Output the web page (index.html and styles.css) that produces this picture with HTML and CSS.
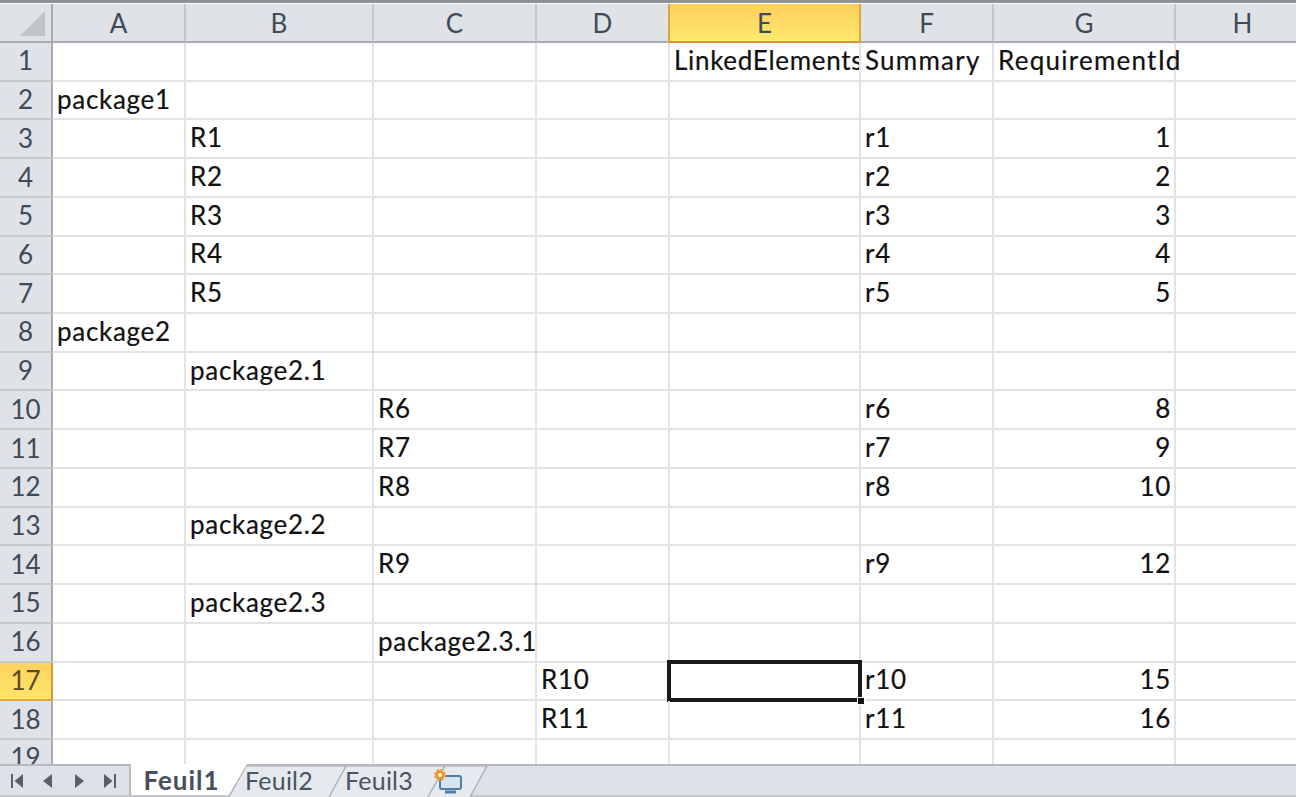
FILE: index.html
```html
<!DOCTYPE html>
<html lang="fr">
<head>
<meta charset="utf-8">
<title>Feuil1</title>
<link rel="stylesheet" href="styles.css">
</head>
<body>
<div class="window">
  <div class="sheet">
    <div class="row head">
      <div class="corner"><svg class="corner-mark" viewBox="0 0 28 28"><path d="M27 1V27H1Z"/></svg></div>
      <div class="col">A</div><div class="col">B</div><div class="col">C</div><div class="col">D</div><div class="col active">E</div><div class="col">F</div><div class="col">G</div><div class="col last">H</div>
    </div>
    <div class="row"><div class="num">1</div><div class="c"></div><div class="c"></div><div class="c"></div><div class="c"></div><div class="c clip">LinkedElements</div><div class="c wide">Summary</div><div class="c wide">RequirementId</div><div class="c"></div></div>
    <div class="row"><div class="num">2</div><div class="c">package1</div><div class="c"></div><div class="c"></div><div class="c"></div><div class="c"></div><div class="c"></div><div class="c"></div><div class="c"></div></div>
    <div class="row"><div class="num">3</div><div class="c"></div><div class="c">R1</div><div class="c"></div><div class="c"></div><div class="c"></div><div class="c">r1</div><div class="c n">1</div><div class="c"></div></div>
    <div class="row"><div class="num">4</div><div class="c"></div><div class="c">R2</div><div class="c"></div><div class="c"></div><div class="c"></div><div class="c">r2</div><div class="c n">2</div><div class="c"></div></div>
    <div class="row"><div class="num">5</div><div class="c"></div><div class="c">R3</div><div class="c"></div><div class="c"></div><div class="c"></div><div class="c">r3</div><div class="c n">3</div><div class="c"></div></div>
    <div class="row"><div class="num">6</div><div class="c"></div><div class="c">R4</div><div class="c"></div><div class="c"></div><div class="c"></div><div class="c">r4</div><div class="c n">4</div><div class="c"></div></div>
    <div class="row"><div class="num">7</div><div class="c"></div><div class="c">R5</div><div class="c"></div><div class="c"></div><div class="c"></div><div class="c">r5</div><div class="c n">5</div><div class="c"></div></div>
    <div class="row"><div class="num">8</div><div class="c">package2</div><div class="c"></div><div class="c"></div><div class="c"></div><div class="c"></div><div class="c"></div><div class="c"></div><div class="c"></div></div>
    <div class="row"><div class="num">9</div><div class="c"></div><div class="c">package2.1</div><div class="c"></div><div class="c"></div><div class="c"></div><div class="c"></div><div class="c"></div><div class="c"></div></div>
    <div class="row"><div class="num">10</div><div class="c"></div><div class="c"></div><div class="c">R6</div><div class="c"></div><div class="c"></div><div class="c">r6</div><div class="c n">8</div><div class="c"></div></div>
    <div class="row"><div class="num">11</div><div class="c"></div><div class="c"></div><div class="c">R7</div><div class="c"></div><div class="c"></div><div class="c">r7</div><div class="c n">9</div><div class="c"></div></div>
    <div class="row"><div class="num">12</div><div class="c"></div><div class="c"></div><div class="c">R8</div><div class="c"></div><div class="c"></div><div class="c">r8</div><div class="c n">10</div><div class="c"></div></div>
    <div class="row"><div class="num">13</div><div class="c"></div><div class="c">package2.2</div><div class="c"></div><div class="c"></div><div class="c"></div><div class="c"></div><div class="c"></div><div class="c"></div></div>
    <div class="row"><div class="num">14</div><div class="c"></div><div class="c"></div><div class="c">R9</div><div class="c"></div><div class="c"></div><div class="c">r9</div><div class="c n">12</div><div class="c"></div></div>
    <div class="row"><div class="num">15</div><div class="c"></div><div class="c">package2.3</div><div class="c"></div><div class="c"></div><div class="c"></div><div class="c"></div><div class="c"></div><div class="c"></div></div>
    <div class="row"><div class="num">16</div><div class="c"></div><div class="c"></div><div class="c">package2.3.1</div><div class="c"></div><div class="c"></div><div class="c"></div><div class="c"></div><div class="c"></div></div>
    <div class="row"><div class="num active">17</div><div class="c"></div><div class="c"></div><div class="c"></div><div class="c">R10</div><div class="c selected"><span class="handle"></span></div><div class="c">r10</div><div class="c n">15</div><div class="c"></div></div>
    <div class="row"><div class="num">18</div><div class="c"></div><div class="c"></div><div class="c"></div><div class="c">R11</div><div class="c"></div><div class="c">r11</div><div class="c n">16</div><div class="c"></div></div>
    <div class="row"><div class="num">19</div><div class="c"></div><div class="c"></div><div class="c"></div><div class="c"></div><div class="c"></div><div class="c"></div><div class="c"></div><div class="c"></div></div>
  </div>
  <div class="tabbar">
    <div class="nav">
      <svg class="nav-icon" viewBox="0 0 12 16"><path d="M0 1H2V15H0ZM12 1V15L3.5 8Z"/></svg>
      <svg class="nav-icon" viewBox="0 0 12 16"><path d="M10 1V15L1 8Z"/></svg>
      <svg class="nav-icon" viewBox="0 0 12 16"><path d="M2 1V15L11 8Z"/></svg>
      <svg class="nav-icon" viewBox="0 0 12 16"><path d="M12 1H10V15H12ZM0 1V15L8.500 8Z"/></svg>
    </div>
    <svg class="tab-shape" viewBox="0 0 500 31" width="500" height="31">
      <path class="tab-fill" d="M229 31L246 0H346L329 31Z"/>
      <path class="tab-fill" d="M329 31L346 0H445L428 31Z"/>
      <path class="tab-fill" d="M428 31L445 0H487L470 31Z"/>
      <path class="tab-line" d="M229 31L246 0H346M329 31L346 0H445M428 31L445 0H487L470 31"/>
    </svg>
    <div class="tab current">Feuil1</div>
    <div class="tab">Feuil2</div>
    <div class="tab">Feuil3</div>
    <div class="tab newsheet">
      <svg class="new-icon" viewBox="0 0 32 28">
        <rect x="8" y="9" width="21" height="13" rx="2" fill="#d5e3f2" stroke="#4f7eab" stroke-width="2"/>
        <path d="M13 25H24" stroke="#4f7eab" stroke-width="3"/>
        <circle cx="8" cy="8" r="4.500" fill="#e08a1e" stroke="#e9a040" stroke-width="3" stroke-dasharray="2.400 1.100"/>
        <circle cx="8" cy="8" r="2.200" fill="#ffe7b0"/>
      </svg>
    </div>
  </div>
</div>
</body>
</html>
```
FILE: styles.css
```css
* { box-sizing: border-box; }
html, body { margin: 0; height: 100%; overflow: hidden; background: #fff; }
.window {
  width: 1296px;
  height: 797px;
  display: flex;
  flex-direction: column;
  border-top: 3px solid #8f9296;
  font-family: "Lato", "Liberation Sans", sans-serif;
  font-size: 26px;
  color: #111;
}
.sheet { flex: 1; min-height: 0; overflow: hidden; display: flex; flex-direction: column; margin-top: 1px; }
.row {
  flex: none;
  display: grid;
  grid-template-columns: 53px 133px 188px 163px 133px 191px 133px 182px 133px;
  height: 38.72px;
  width: 1309px;
}
.row.head { height: 39px; }
.corner, .col {
  background: #dfe2e7;
  border-right: 2px solid #c3c6cb;
  border-bottom: 2px solid #a9adb3;
}
.corner { display: flex; align-items: flex-end; justify-content: flex-end; padding: 0 5px 4px 0; border-right-color: #a9adb3; }
.corner-mark { width: 27px; height: 27px; }
.corner-mark path { fill: #c0c3c7; }
.col, .num {
  display: flex;
  align-items: center;
  justify-content: center;
  color: #3f4a57;
}
.col.last { border-right: 0; }
.col.active {
  margin-left: -2px;
  background: linear-gradient(#fdcf5c, #ffe96f);
  border-right-color: #e2a63c;
  border-bottom-color: #d9973a;
  border-left: 2px solid #e2a63c;
}
.num {
  background: #dfe2e7;
  border-right: 2px solid #a9adb3;
  border-bottom: 2px solid #c6c9ce;
  padding-bottom: 2px;
}
.num.active {
  background: linear-gradient(#fdd35e, #ffe56b);
  color: #5b4a20;
  border-bottom-color: #e2a63c;
  border-right-color: #d9973a;
}
.c {
  position: relative;
  padding: 0 5px 3px 4px;
  display: flex;
  align-items: center;
  white-space: nowrap;
  letter-spacing: 0.7px;
  -webkit-text-stroke: 0.2px #111;
  border-right: 2px solid #e3e3e3;
  border-bottom: 2px solid #e3e3e3;
}
.c.n { justify-content: flex-end; padding-right: 3px; }
.c.wide { letter-spacing: 1.25px; }
.c.clip { overflow: hidden; }
.selected { border: 0; }
.selected::before {
  content: "";
  position: absolute;
  left: -3px;
  top: -3px;
  right: -1px;
  bottom: -1px;
  border: 4px solid #1a1a1a;
}
.handle {
  position: absolute;
  right: -4px;
  bottom: -4px;
  width: 8px;
  height: 8px;
  background: #111;
  border: 1px solid #fff;
  z-index: 1;
}
.tabbar {
  flex: none;
  position: relative;
  height: 33px;
  display: flex;
  background: #dde1e8;
  border-top: 2px solid #b7bac0;
  border-bottom: 2px solid #c5c7cb;
  color: #4a5563;
  font-size: 25px;
}
.nav {
  width: 131px;
  display: flex;
  align-items: center;
  gap: 19px;
  padding-left: 11px;
  border-right: 2px solid #b7bac0;
}
.nav-icon { width: 12px; height: 16px; flex: none; }
.nav-icon path { fill: #5a6069; }
.tab {
  position: relative;
  width: 100px;
  display: flex;
  align-items: center;
  justify-content: center;
  line-height: 1;
  letter-spacing: 0.2px;
}
.tab.current {
  width: 116px;
  margin-right: -18px;
  margin-top: -2px;
  background: #fff;
  font-size: 26px;
  font-weight: 700;
  color: #47505c;
  clip-path: polygon(0 0, 100% 0, 84% 100%, 0 100%);
  padding-right: 15px;
  letter-spacing: 1px;
}
.tab.newsheet { width: 48px; justify-content: flex-start; padding-left: 3px; }
.new-icon { width: 32px; height: 28px; }
.tab-shape { position: absolute; left: 0; top: 0; }
.tab-fill { fill: #e6e9ee; }
.tab-line { fill: none; stroke: #a6aab1; stroke-width: 1.2; }
```
